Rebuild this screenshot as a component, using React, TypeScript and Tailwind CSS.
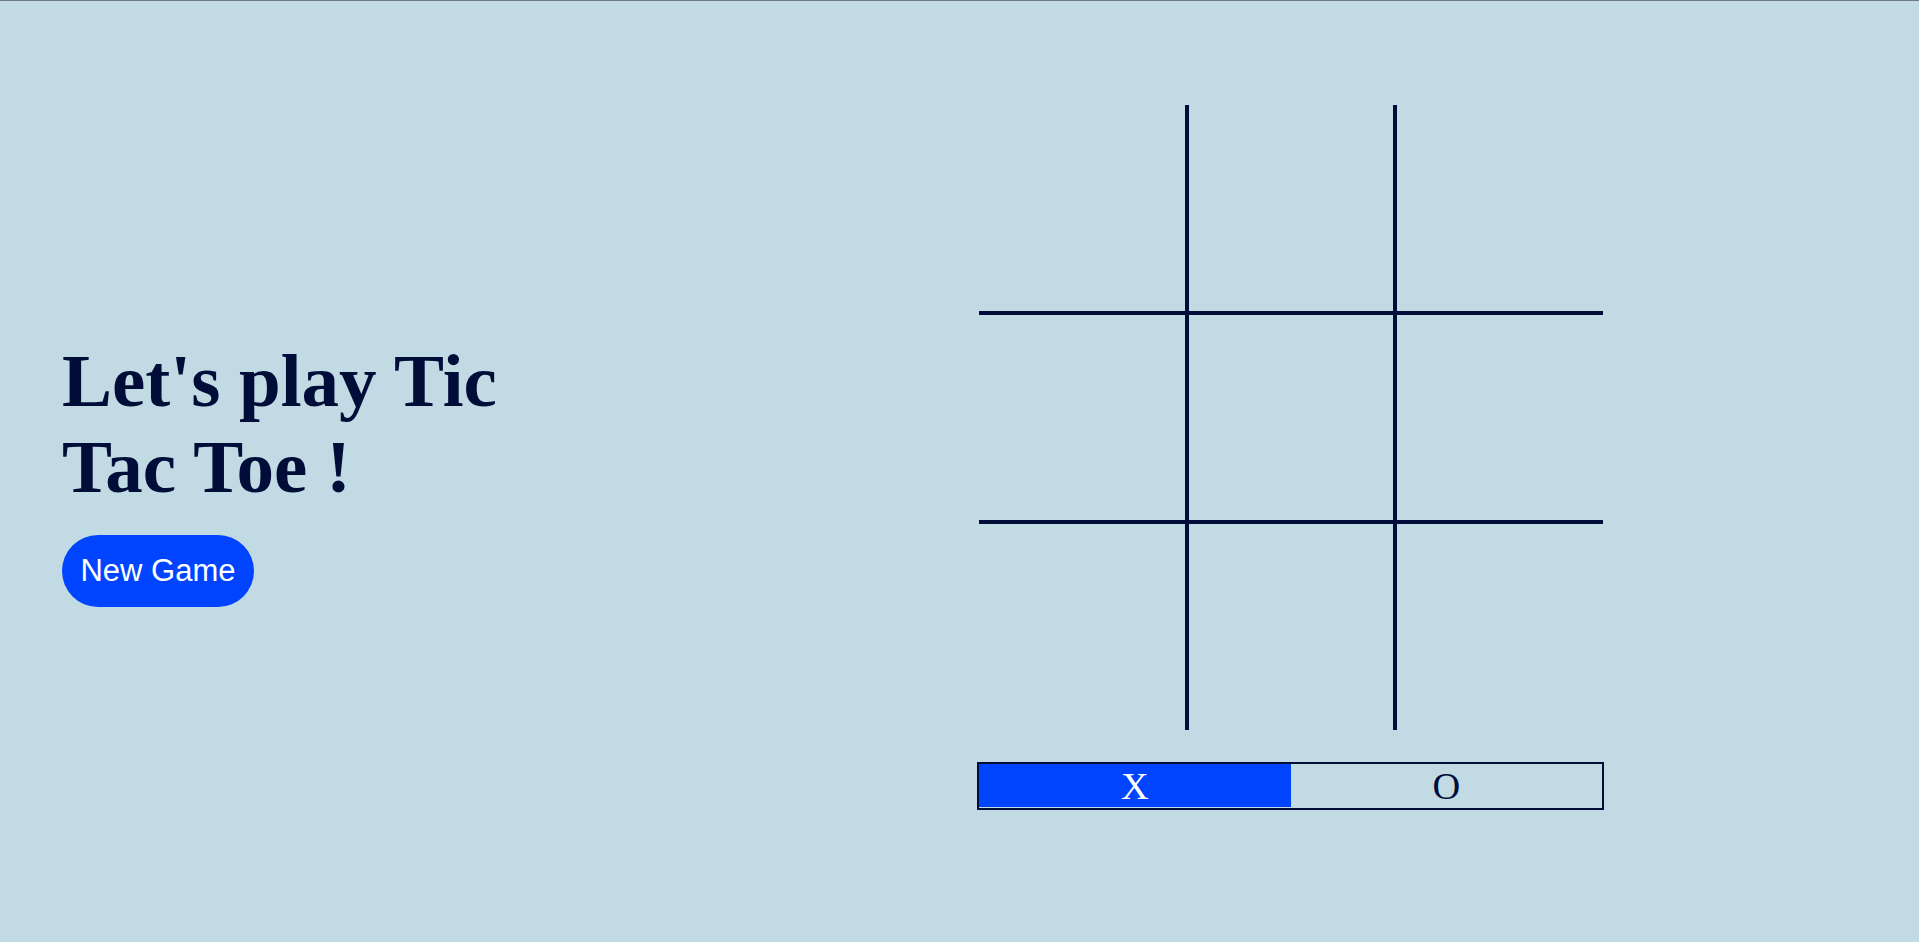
import { useState } from "react";

type Cell = "X" | "O" | null;

const cellBorders = [
  "border-r-2 border-b-2",
  "border-l-2 border-r-2 border-b-2",
  "border-l-2 border-b-2",
  "border-t-2 border-r-2 border-b-2",
  "border-2",
  "border-t-2 border-l-2 border-b-2",
  "border-t-2 border-r-2",
  "border-t-2 border-l-2 border-r-2",
  "border-t-2 border-l-2",
];

export default function App() {
  const [cells, setCells] = useState<Cell[]>(Array(9).fill(null));
  const [turn, setTurn] = useState<"X" | "O">("X");

  function play(i: number) {
    if (cells[i]) return;
    const next = cells.slice();
    next[i] = turn;
    setCells(next);
    setTurn(turn === "X" ? "O" : "X");
  }

  function reset() {
    setCells(Array(9).fill(null));
    setTurn("X");
  }

  return (
    <div className="flex h-screen items-center border-t border-[#6d7a84] bg-[#c1dae3] pt-[2px] text-[#000d38]">
      <div className="w-[977px] shrink-0 pl-[62px]">
        <h1 className="mb-[25px] max-w-[500px] font-['Liberation_Serif',serif] text-[75px] font-bold leading-[86.25px]">
          Let's play Tic Tac Toe !
        </h1>
        <button
          type="button"
          onClick={reset}
          className="flex h-[72px] w-[192px] items-center justify-center rounded-full bg-[#0044ff] font-['Liberation_Sans',Arial,sans-serif] text-[31px] text-white"
        >
          New Game
        </button>
      </div>

      <div className="mb-[30px] flex w-[627px] flex-col items-center">
        <div className="ml-[1px] grid h-[625px] w-[625px] grid-cols-3 grid-rows-3">
          {cells.map((c, i) => (
            <button
              key={i}
              type="button"
              onClick={() => play(i)}
              className={`flex items-center justify-center border-[#000d38] font-['Liberation_Serif',serif] text-[120px] ${cellBorders[i]}`}
            >
              {c}
            </button>
          ))}
        </div>

        <div className="mt-[32px] flex h-[48px] w-[627px] items-start border-2 border-[#000d38] font-['Liberation_Serif',serif] text-[38.4px] leading-[44px]">
          <span
            className={`flex h-[43px] w-1/2 items-center justify-center ${
              turn === "X" ? "bg-[#0044ff] text-white" : ""
            }`}
          >
            X
          </span>
          <span
            className={`flex h-[43px] w-1/2 items-center justify-center ${
              turn === "O" ? "bg-[#0044ff] text-white" : ""
            }`}
          >
            O
          </span>
        </div>
      </div>
    </div>
  );
}
